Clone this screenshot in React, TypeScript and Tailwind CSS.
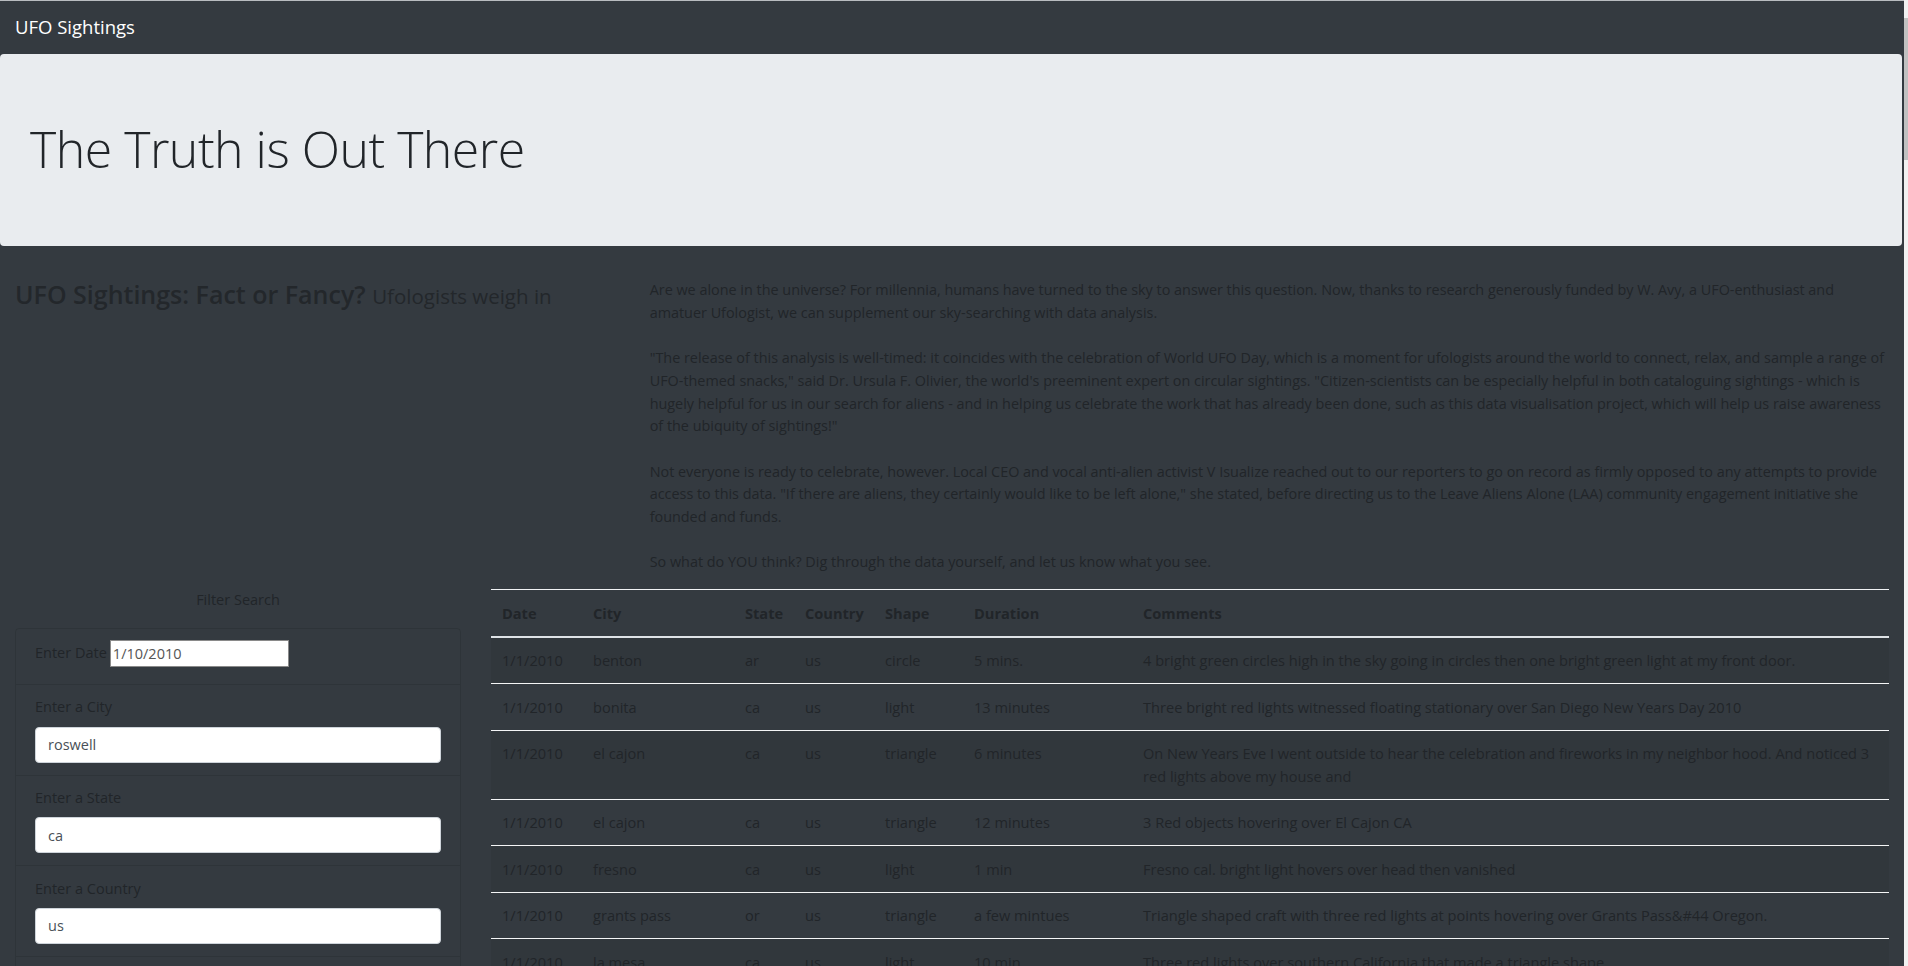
import React from "react";

type Sighting = {
  date: string;
  city: string;
  state: string;
  country: string;
  shape: string;
  duration: string;
  comments: React.ReactNode;
};

const sightings: Sighting[] = [
  {
    date: "1/1/2010",
    city: "benton",
    state: "ar",
    country: "us",
    shape: "circle",
    duration: "5 mins.",
    comments:
      "4 bright green circles high in the sky going in circles then one bright green light at my front door.",
  },
  {
    date: "1/1/2010",
    city: "bonita",
    state: "ca",
    country: "us",
    shape: "light",
    duration: "13 minutes",
    comments:
      "Three bright red lights witnessed floating stationary over San Diego New Years Day 2010",
  },
  {
    date: "1/1/2010",
    city: "el cajon",
    state: "ca",
    country: "us",
    shape: "triangle",
    duration: "6 minutes",
    comments: (
      <span className="whitespace-nowrap">
        On New Years Eve I went outside to hear the celebration and fireworks in my neighbor hood. And noticed 3
        <br />
        red lights above my house and
      </span>
    ),
  },
  {
    date: "1/1/2010",
    city: "el cajon",
    state: "ca",
    country: "us",
    shape: "triangle",
    duration: "12 minutes",
    comments: "3 Red objects hovering over El Cajon CA",
  },
  {
    date: "1/1/2010",
    city: "fresno",
    state: "ca",
    country: "us",
    shape: "light",
    duration: "1 min",
    comments: "Fresno cal. bright light hovers over head then vanished",
  },
  {
    date: "1/1/2010",
    city: "grants pass",
    state: "or",
    country: "us",
    shape: "triangle",
    duration: "a few mintues",
    comments:
      "Triangle shaped craft with three red lights at points hovering over Grants Pass&#44 Oregon.",
  },
  {
    date: "1/1/2010",
    city: "la mesa",
    state: "ca",
    country: "us",
    shape: "light",
    duration: "10 min",
    comments: "Three red lights over southern California that made a triangle shape",
  },
  {
    date: "1/1/2010",
    city: "lakeside",
    state: "ca",
    country: "us",
    shape: "light",
    duration: "3 minutes",
    comments: "Red lights moving slowly over the hills then gone",
  },
];

const filters = [
  { label: "Enter a City", value: "roswell" },
  { label: "Enter a State", value: "ca" },
  { label: "Enter a Country", value: "us" },
  { label: "Enter a Shape", value: "" },
];

export default function App() {
  return (
    <div
      className="flex min-h-screen bg-[#343a40] text-[#212529] text-[14.5px] leading-[22.7px]"
      style={{ fontFamily: '"Open Sans", "Liberation Sans", sans-serif' }}
    >
      <div className="flex-1 min-w-0">
        {/* Navbar */}
        <nav className="h-[54px] border-t border-[#b9bcc0] bg-[#343a40] px-[15px] flex items-center">
          <span className="text-[18.5px] text-white">UFO Sightings</span>
        </nav>

        {/* Jumbotron */}
        <div className="mr-[2px] bg-[#e9ecef] rounded-[4px] px-[30px] pt-[65px] pb-[60px] mb-[30px]">
          <h1 className="text-[50px] tracking-[-0.5px] font-light leading-[1.2] mb-[7px] text-[#212529]">
            The Truth is Out There
          </h1>
        </div>

        <div className="px-[15px]">
          {/* Intro row */}
          <div className="flex -mx-[15px]">
            <div className="w-1/3 px-[15px]">
              <h3 className="text-[25px] font-semibold leading-[1.2] mt-[3px] mb-[7px] text-[#23272b]">
                UFO Sightings: Fact or Fancy?{" "}
                <small className="text-[20.5px] font-normal">Ufologists weigh in</small>
              </h3>
            </div>
            <div className="w-2/3 px-[15px]">
              <p className="mt-[3px] mb-[15px] whitespace-nowrap text-[14.4px]">
                Are we alone in the universe? For millennia, humans have turned to the sky to answer this question. Now, thanks to research generously funded by W. Avy, a UFO-enthusiast and
                <br />
                amatuer Ufologist, we can supplement our sky-searching with data analysis.
                <br />
                <br />
                "The release of this analysis is well-timed: it coincides with the celebration of World UFO Day, which is a moment for ufologists around the world to connect, relax, and sample a range of
                <br />
                UFO-themed snacks," said Dr. Ursula F. Olivier, the world's preeminent expert on circular sightings. "Citizen-scientists can be especially helpful in both cataloguing sightings - which is
                <br />
                hugely helpful for us in our search for aliens - and in helping us celebrate the work that has already been done, such as this data visualisation project, which will help us raise awareness
                <br />
                of the ubiquity of sightings!"
                <br />
                <br />
                Not everyone is ready to celebrate, however. Local CEO and vocal anti-alien activist V Isualize reached out to our reporters to go on record as firmly opposed to any attempts to provide
                <br />
                access to this data. "If there are aliens, they certainly would like to be left alone," she stated, before directing us to the Leave Aliens Alone (LAA) community engagement initiative she
                <br />
                founded and funds.
                <br />
                <br />
                So what do YOU think? Dig through the data yourself, and let us know what you see.
              </p>
            </div>
          </div>

          {/* Filter + table row */}
          <div className="flex -mx-[15px]">
            <div className="w-1/4 px-[15px]">
              <p className="text-center mb-[16px]">Filter Search</p>
              <ul className="border border-black/10 rounded-[4px]">
                <li className="px-[19px] pt-[11px] pb-[17px] flex items-center">
                  <label className="mr-[3px]">Enter Date</label>
                  <input
                    readOnly
                    value="1/10/2010"
                    className="w-[179px] h-[27px] bg-white border border-[#8a8a8a] px-[2px] text-[14.5px] text-[#555]"
                  />
                </li>
                {filters.map((f) => (
                  <li key={f.label} className="border-t border-black/10 px-[19px] pt-[11.5px] pb-[12px]">
                    <label className="block mb-[7.5px]">{f.label}</label>
                    <input
                      readOnly
                      value={f.value}
                      className="w-full h-[36px] bg-white border border-[#ced4da] rounded-[4px] px-[12px] text-[14.5px] text-[#495057]"
                    />
                  </li>
                ))}
                <li className="border-t border-black/10 px-[19px] py-[11px]">
                  <button className="bg-[#007bff] text-white rounded-[4px] px-[12px] py-[6px]">
                    Filter Table
                  </button>
                </li>
              </ul>
            </div>

            <div className="w-3/4 px-[15px]">
              <table className="w-full table-fixed border-collapse text-left text-[14.6px]">
                <colgroup>
                  <col className="w-[91px]" />
                  <col className="w-[152px]" />
                  <col className="w-[60px]" />
                  <col className="w-[80px]" />
                  <col className="w-[89px]" />
                  <col className="w-[169px]" />
                  <col />
                </colgroup>
                <thead>
                  <tr className="border-t border-[#f1f3f5] border-b-2 border-b-[#dee2e6]">
                    {["Date", "City", "State", "Country", "Shape", "Duration", "Comments"].map((h) => (
                      <th key={h} className="px-[11px] py-[11.5px] font-bold align-bottom">
                        {h}
                      </th>
                    ))}
                  </tr>
                </thead>
                <tbody>
                  {sightings.map((s, i) => (
                    <tr
                      key={i}
                      className={`border-t border-[#f4f5f6] ${i % 2 === 0 ? "bg-black/5" : ""}`}
                    >
                      <td className="px-[11px] py-[11.4px] align-top">{s.date}</td>
                      <td className="px-[11px] py-[11.4px] align-top">{s.city}</td>
                      <td className="px-[11px] py-[11.4px] align-top">{s.state}</td>
                      <td className="px-[11px] py-[11.4px] align-top">{s.country}</td>
                      <td className="px-[11px] py-[11.4px] align-top">{s.shape}</td>
                      <td className="px-[11px] py-[11.4px] align-top">{s.duration}</td>
                      <td className="px-[11px] py-[11.4px] align-top">{s.comments}</td>
                    </tr>
                  ))}
                </tbody>
              </table>
            </div>
          </div>
        </div>
      </div>

      {/* scrollbar strip */}
      <div className="w-[4px] shrink-0 bg-[#f1f1f1]">
        <div className="mt-[18px] h-[142px] bg-[#c1c1c1]" />
      </div>
    </div>
  );
}
